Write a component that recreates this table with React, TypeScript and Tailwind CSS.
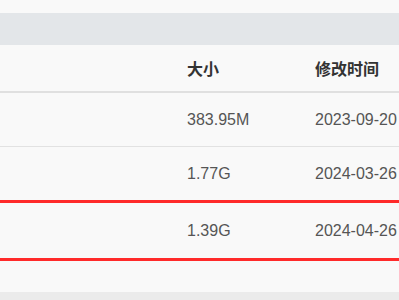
import React from "react";

const rows = [
  { size: "383.95M", time: "2023-09-20" },
  { size: "1.77G", time: "2024-03-26" },
];

export default function App() {
  return (
    <div
      className="w-[399px] h-[300px] overflow-hidden bg-[#f9f9f9] flex flex-col"
      style={{ fontFamily: '"Liberation Sans", Arial, "Noto Sans CJK SC", sans-serif' }}
    >
      <div className="h-[13px] shrink-0" />
      <div className="h-[32px] shrink-0 bg-[#e3e6e9]" />
      <div className="h-[48px] shrink-0 flex items-center pt-[4px] border-b-2 border-[#e0e0e0] text-[16px] font-bold text-[#333]">
        <div className="w-[187px] shrink-0" />
        <div className="w-[128px] shrink-0">大小</div>
        <div className="whitespace-nowrap">修改时间</div>
      </div>
      {rows.map((r, i) => (
        <div
          key={i}
          className={
            i === 0
              ? "h-[54px] shrink-0 flex items-center border-b border-[#e2e2e2] text-[16px] text-[#555]"
              : "h-[53px] shrink-0 flex items-center text-[16px] text-[#555]"
          }
        >
          <div className="w-[187px] shrink-0" />
          <div className="w-[128px] shrink-0">{r.size}</div>
          <div className="whitespace-nowrap">{r.time}</div>
        </div>
      ))}
      <div className="h-[61px] shrink-0 flex items-center border-y-[3px] border-[#ff2a2a] text-[16px] text-[#555]">
        <div className="w-[187px] shrink-0" />
        <div className="w-[128px] shrink-0">1.39G</div>
        <div className="whitespace-nowrap">2024-04-26</div>
      </div>
      <div className="h-[31px] shrink-0" />
      <div className="flex-1 bg-[#ebebeb]" />
    </div>
  );
}
